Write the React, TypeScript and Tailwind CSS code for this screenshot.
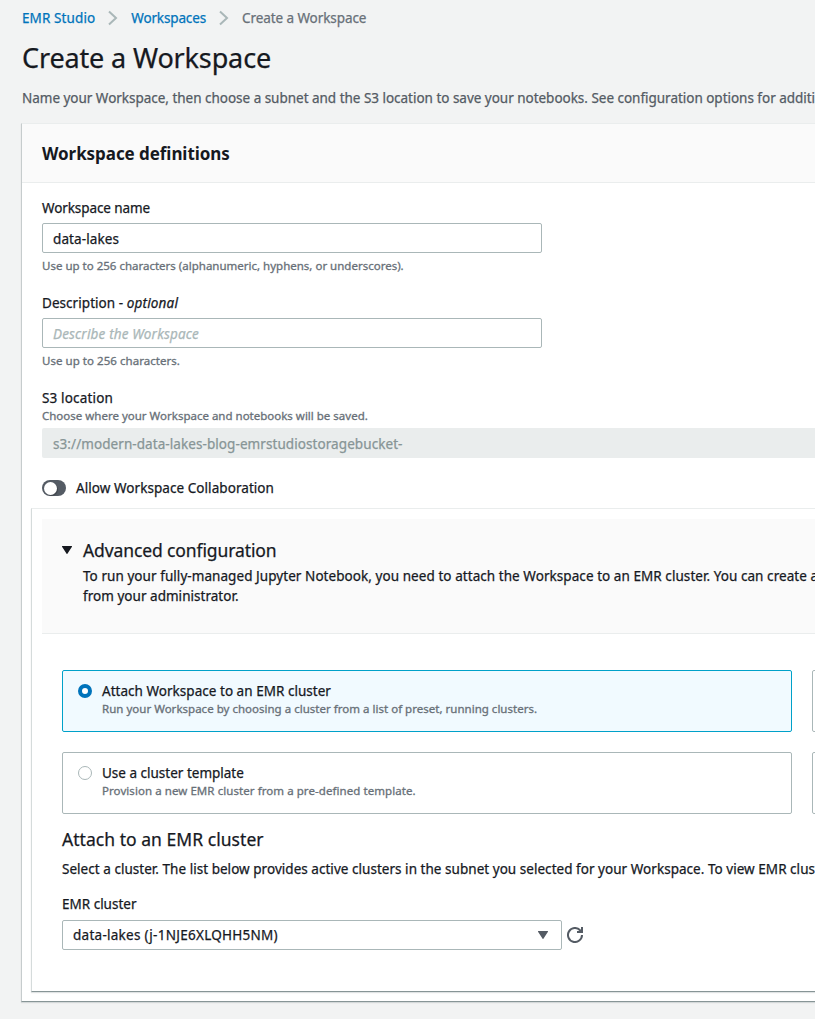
import type { ReactNode } from "react";

const BODY = "text-[13.5px] leading-5";
const SMALL = "text-[11.5px] leading-4 text-[#687078] [-webkit-text-stroke:0.3px]";

function Chevron() {
  return (
    <svg className="mx-3 h-4 w-3 shrink-0" viewBox="0 0 12 16" fill="none" stroke="#aab7b8" strokeWidth="2">
      <path d="M2 1.5 9 8l-7 6.5" />
    </svg>
  );
}

function Caret({ className }: { className: string }) {
  return (
    <svg className={className} viewBox="0 0 10 8" fill="currentColor">
      <path d="M.6 0h8.8a.5.5 0 0 1 .4.9L5.4 7.7a.5.5 0 0 1-.8 0L.2.9A.5.5 0 0 1 .6 0Z" />
    </svg>
  );
}

function Refresh() {
  return (
    <svg className="ml-[5px] h-4 w-4 text-[#545b64]" viewBox="0 0 16 16" fill="none" stroke="currentColor" strokeWidth="2">
      <path d="M15 8a7 7 0 1 1-1.9-4.8L15 5" />
      <path d="M15 0v5h-5" />
    </svg>
  );
}

function Radio({ checked }: { checked: boolean }) {
  return checked ? (
    <span className="mt-[3px] h-3.5 w-3.5 shrink-0 rounded-full border-4 border-[#0073bb] bg-white" />
  ) : (
    <span className="mt-[3px] h-3.5 w-3.5 shrink-0 rounded-full border border-[#aab7b8] bg-white" />
  );
}

function OptionCard({ checked, title, hint }: { checked: boolean; title: ReactNode; hint: ReactNode }) {
  return (
    <div
      className={`flex h-[62px] w-[730px] shrink-0 rounded-[2px] border pt-2.5 pl-[15px] ${
        checked ? "border-[#00a1c9] bg-[#f1faff]" : "border-[#aab7b8] bg-white"
      }`}
    >
      <Radio checked={checked} />
      <div className="ml-2.5">
        <div className={BODY}>{title}</div>
        <div className={SMALL}>{hint}</div>
      </div>
    </div>
  );
}

function EmptyCard() {
  return <div className="h-[62px] w-[730px] shrink-0 rounded-[2px] border border-[#aab7b8] bg-white" />;
}

export default function App() {
  return (
    <div className="h-[1019px] w-[815px] overflow-hidden bg-[#f2f3f3] font-['Noto_Sans',sans-serif] whitespace-nowrap text-[#16191f] [-webkit-text-stroke:0.25px]">
      <nav className={`flex items-center pt-2 pl-[22px] ${BODY}`}>
        <a className="tracking-[0.1px] text-[#0073bb]">EMR Studio</a>
        <Chevron />
        <a className="tracking-[-0.14px] text-[#0073bb]">Workspaces</a>
        <Chevron />
        <span className="tracking-[-0.08px] text-[#687078]">Create a Workspace</span>
      </nav>
      <h1 className="mt-3 pl-[22px] text-[27px] leading-9 tracking-[-0.14px]">Create a Workspace</h1>
      <p className={`mt-3 pl-[22px] tracking-[-0.02px] text-[#545b64] ${BODY}`}>
        Name your Workspace, then choose a subnet and the S3 location to save your notebooks. See configuration options for additi
      </p>

      <section className="mt-[15px] ml-[21px] h-[879px] border-t border-b border-l border-t-[#eaeded] border-b-[#879596] border-l-[#c6cccd] bg-white shadow-[0_1px_1px_0_rgba(0,28,36,0.12)]">
        <header className="h-[59px] border-b border-[#eaeded] bg-[#fafafa] pt-[19px] pl-5">
          <h2 className="text-[17px] leading-[22px] font-bold tracking-[-0.06px] [-webkit-text-stroke:0]">Workspace definitions</h2>
        </header>

        <div className="pt-[15px] pl-5">
          <div className={`tracking-[-0.1px] ${BODY}`}>Workspace name</div>
          <div className={`mt-[5px] h-[30px] w-[500px] rounded-[2px] border border-[#aab7b8] pt-[5px] pl-2.5 tracking-[0.1px] ${BODY}`}>
            data-lakes
          </div>
          <div className={`mt-[5px] ${SMALL}`}>Use up to 256 characters (alphanumeric, hyphens, or underscores).</div>

          <div className={`mt-[19px] ${BODY}`}>
            <span className="tracking-[0.05px]">Description - </span>
            <i className="tracking-[0.18px]">optional</i>
          </div>
          <div className={`mt-[5px] h-[30px] w-[500px] rounded-[2px] border border-[#aab7b8] pt-[5px] pl-2.5 tracking-[0.17px] text-[#aab7b8] italic ${BODY}`}>
            Describe the Workspace
          </div>
          <div className={`mt-[5px] tracking-[0.04px] ${SMALL}`}>Use up to 256 characters.</div>

          <div className={`mt-[19px] tracking-[0.16px] ${BODY}`}>S3 location</div>
          <div className={SMALL}>Choose where your Workspace and notebooks will be saved.</div>
          <div className={`mt-1 h-[30px] rounded-l-[2px] bg-[#eaeded] pt-1.5 pl-[11px] tracking-[0.075px] text-[#879596] ${BODY}`}>
            s3://modern-data-lakes-blog-emrstudiostoragebucket-
          </div>

          <div className="mt-5 flex items-center">
            <span className="flex h-4 w-6 items-center rounded-full bg-[#545b64] pl-0.5">
              <span className="h-[13px] w-[13px] rounded-full bg-white shadow-[1px_1px_1px_rgba(0,0,0,0.25)]" />
            </span>
            <span className={`ml-2.5 tracking-[0.06px] ${BODY}`}>Allow Workspace Collaboration</span>
          </div>
        </div>

        <section className="mt-2.5 ml-[9px] h-[484px] border-t border-b border-l border-t-[#eaeded] border-b-[#879596] border-l-[#d5dbdb] bg-white shadow-[0_1px_1px_0_rgba(0,28,36,0.12)]">
          <header className="mt-2.5 ml-2.5 flex h-[115px] border-b border-[#eaeded] bg-[#fafafa] pt-5 pl-5">
            <Caret className="mt-[7px] h-2 w-2.5 shrink-0" />
            <div className="ml-[11px]">
              <h3 className="text-[17.5px] leading-[22px] tracking-[-0.11px]">Advanced configuration</h3>
              <p className={`mt-[5px] ${BODY}`}>
                <span className="tracking-[0.06px]">
                  To run your fully-managed Jupyter Notebook, you need to attach the Workspace to an EMR cluster. You can create a
                </span>
                <br />
                <span className="tracking-[0.03px]">from your administrator.</span>
              </p>
            </div>
          </header>

          <div className="pt-9 pl-[30px]">
            <div className="flex gap-5 overflow-hidden">
              <OptionCard
                checked
                title={<span className="tracking-[0.03px]">Attach Workspace to an EMR cluster</span>}
                hint={
                  <span className="tracking-[0.015px]">
                    Run your Workspace by choosing a cluster from a list of preset, running clusters.
                  </span>
                }
              />
              <EmptyCard />
            </div>
            <div className="mt-5 flex gap-5 overflow-hidden">
              <OptionCard
                checked={false}
                title="Use a cluster template"
                hint={<span className="tracking-[0.065px]">Provision a new EMR cluster from a pre-defined template.</span>}
              />
              <EmptyCard />
            </div>

            <h3 className="mt-3.5 text-[17.5px] leading-[22px] tracking-[0.04px]">Attach to an EMR cluster</h3>
            <p className={`mt-[9px] tracking-[0.036px] ${BODY}`}>
              Select a cluster. The list below provides active clusters in the subnet you selected for your Workspace. To view EMR clus
            </p>
            <div className={`mt-[15px] ${BODY}`}>EMR cluster</div>
            <div className="mt-1.5 flex items-center">
              <div className="flex h-[30px] w-[500px] items-center justify-between rounded-[2px] border border-[#aab7b8] pr-[13px] pl-2.5">
                <span className={`tracking-[0.27px] ${BODY}`}>data-lakes (j-1NJE6XLQHH5NM)</span>
                <Caret className="h-2 w-2.5 text-[#545b64]" />
              </div>
              <Refresh />
            </div>
          </div>
        </section>
      </section>
    </div>
  );
}
